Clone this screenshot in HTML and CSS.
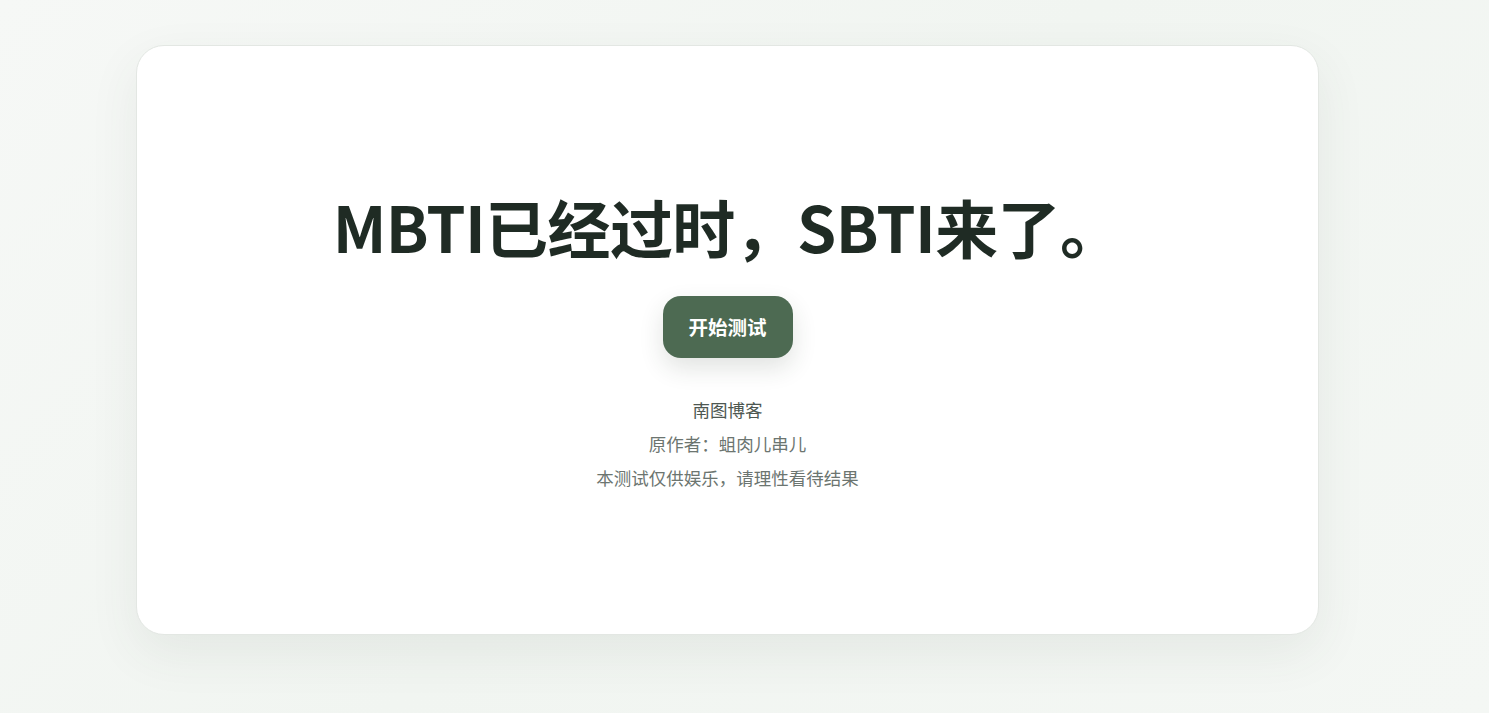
FILE: index.html
```html
<!DOCTYPE html>
<html lang="zh-CN">
<head>
<meta charset="utf-8">
<title>SBTI</title>
<link rel="stylesheet" href="styles.css">
</head>
<body>
<main class="page">
  <section class="card">
    <h1 class="title">MBTI已经过时，SBTI来了。</h1>
    <button class="start-btn">开始测试</button>
    <div class="meta">
      <p class="meta-line meta-strong">南图博客</p>
      <p class="meta-line">原作者：蛆肉儿串儿</p>
      <p class="meta-line">本测试仅供娱乐，请理性看待结果</p>
    </div>
  </section>
</main>
</body>
</html>
```

FILE: styles.css
```css
html, body {
  margin: 0;
  padding: 0;
  height: 100%;
}
body {
  background: linear-gradient(135deg, #f6f8f6 0%, #f1f5f1 50%, #f4f7f4 100%);
  font-family: "Noto Sans CJK SC", "Noto Sans", sans-serif;
  color: #1f2a23;
}
.page {
  padding: 45px 170px 0 136px;
}
.card {
  box-sizing: border-box;
  height: 590px;
  padding-top: 5px;
  background: #ffffff;
  border: 1px solid #e3e7e3;
  border-radius: 28px;
  box-shadow: 0 18px 50px rgba(60, 80, 65, 0.08);
  display: flex;
  flex-direction: column;
  align-items: center;
  justify-content: center;
}
.title {
  margin: 0;
  font-size: 63px;
  line-height: 1.2;
  font-weight: 700;
  color: #1f2b24;
  letter-spacing: -0.6px;
  transform: translateY(-2px);
}
.start-btn {
  margin-top: 30px;
  width: 130px;
  height: 62px;
  border: none;
  border-radius: 18px;
  background: #4d6a52;
  color: #ffffff;
  font-family: "Noto Sans CJK SC", sans-serif;
  font-size: 19.5px;
  font-weight: 700;
  box-shadow: 0 10px 24px rgba(40, 60, 45, 0.14);
}
.meta {
  margin-top: 35px;
  display: flex;
  flex-direction: column;
  align-items: center;
}
.meta-line {
  margin: 0;
  font-size: 17.5px;
  line-height: 34px;
  color: #6c7570;
}
.meta-strong {
  color: #4d5751;
}
```
